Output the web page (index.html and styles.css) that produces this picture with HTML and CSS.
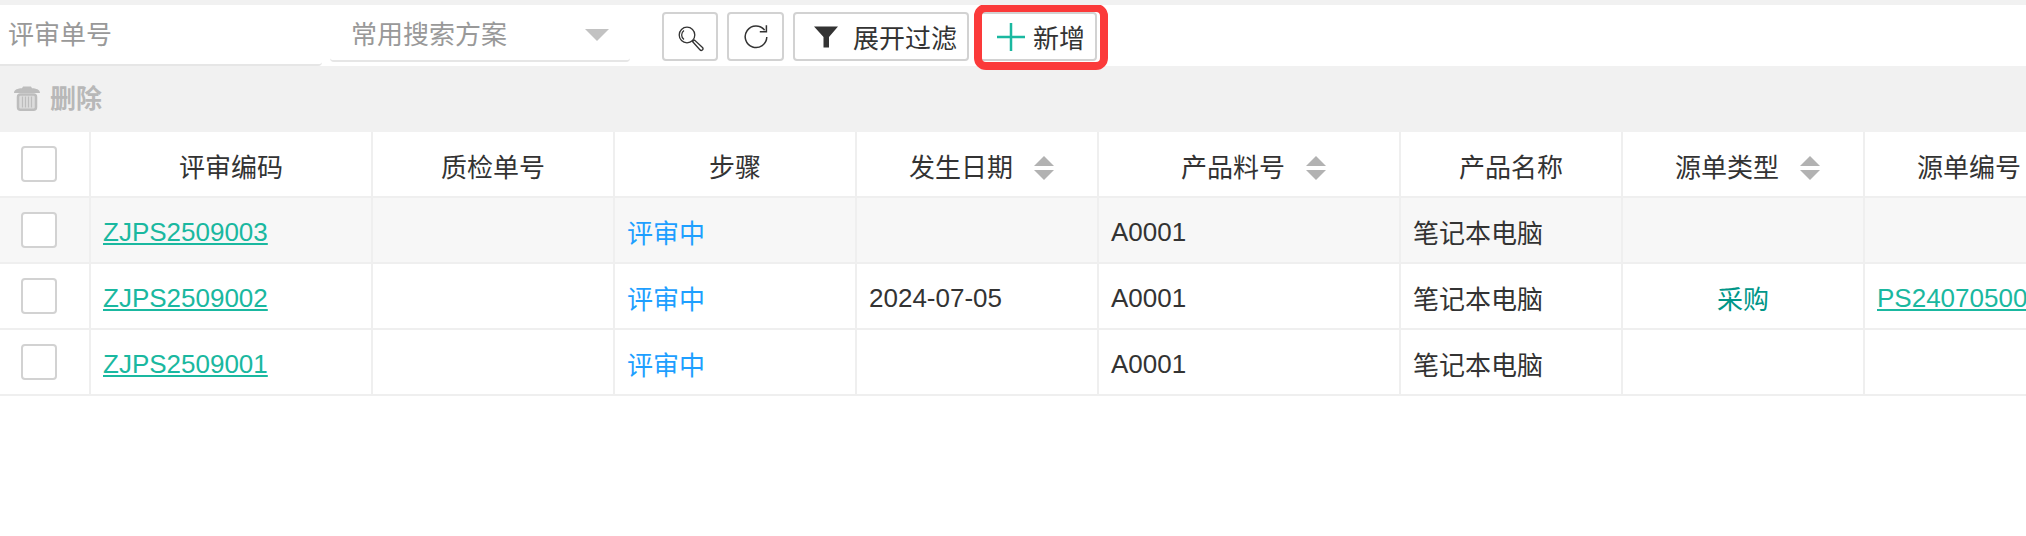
FILE: index.html
```html
<!DOCTYPE html>
<html lang="en">
<head>
    <meta charset="UTF-8">
    <title>评审单</title>
    <link rel="stylesheet" href="styles.css">
</head>
<body>
    <div class="toolbar">
        <div class="search-input">评审单号</div>
        <div class="search-select">
            <span>常用搜索方案</span>
            <i class="select-caret"></i>
        </div>
        <div class="buttons">
            <button class="btn btn-icon" type="button">
                <svg width="28" height="30" viewBox="0 0 28 30" fill="none" stroke="#333" stroke-width="1.3">
                    <circle cx="11" cy="13" r="7.800"/>
                    <path d="M8 8.500a5.500 5.500 0 0 0 0 9"/>
                    <path d="M16.500 19.500l2-1.500 8 7.500a1.700 1.700 0 0 1-2.600 2.300z"/>
                </svg>
            </button>
            <button class="btn btn-icon" type="button">
                <svg width="26" height="26" viewBox="0 0 26 26" fill="none" stroke="#333" stroke-width="1.5">
                    <path d="M21.600 6.200A10.800 10.800 0 1 0 23.800 13"/>
                    <path d="M23.400 1.200v6.600h-6.600"/>
                </svg>
            </button>
            <button class="btn btn-filter" type="button">
                <svg width="24" height="22" viewBox="0 0 24 22">
                    <path d="M0 0.500h24l-9 10.500v10.500h-5.500V11z" fill="#333"/>
                </svg>
                <span>展开过滤</span>
            </button>
            <button class="btn btn-add" type="button">
                <svg width="28" height="28" viewBox="0 0 28 28">
                    <path d="M0 14h28M14 0v28" stroke="#1ab8a0" stroke-width="2.500"/>
                </svg>
                <span>新增</span>
                <i class="red-mark"></i>
            </button>
        </div>
    </div>

    <div class="action-bar">
        <svg class="trash" width="26" height="25" viewBox="0 0 26 25">
            <path d="M0 7C0 3.500 4 2.500 8 2.300L9 0.500h8l1 1.800c4 0.200 8 1.200 8 4.700z" fill="#bdbdbd"/>
            <rect x="4" y="8.500" width="18" height="15.200" rx="2.500" fill="#dcdcdc" stroke="#bdbdbd" stroke-width="2.500"/>
            <path d="M8.500 10.500v11M11.500 10.500v11M14.500 10.500v11M17.500 10.500v11" stroke="#bdbdbd" stroke-width="1.200"/>
        </svg>
        <span>删除</span>
    </div>

    <div class="table-wrap">
        <table class="grid">
            <colgroup>
                <col class="w-check">
                <col class="w-code">
                <col class="w-std">
                <col class="w-std">
                <col class="w-std">
                <col class="w-part">
                <col class="w-name">
                <col class="w-std">
                <col class="w-last">
            </colgroup>
            <thead>
                <tr>
                    <th class="check-cell"><input class="check" type="checkbox"></th>
                    <th>评审编码</th>
                    <th>质检单号</th>
                    <th>步骤</th>
                    <th>发生日期<span class="sort"></span></th>
                    <th>产品料号<span class="sort"></span></th>
                    <th>产品名称</th>
                    <th>源单类型<span class="sort"></span></th>
                    <th>源单编号</th>
                </tr>
            </thead>
            <tbody>
                <tr class="row-hover">
                    <td class="check-cell"><input class="check" type="checkbox"></td>
                    <td class="latin"><a href="#">ZJPS2509003</a></td>
                    <td></td>
                    <td class="status">评审中</td>
                    <td></td>
                    <td class="latin">A0001</td>
                    <td>笔记本电脑</td>
                    <td></td>
                    <td></td>
                </tr>
                <tr>
                    <td class="check-cell"><input class="check" type="checkbox"></td>
                    <td class="latin"><a href="#">ZJPS2509002</a></td>
                    <td></td>
                    <td class="status">评审中</td>
                    <td class="latin">2024-07-05</td>
                    <td class="latin">A0001</td>
                    <td>笔记本电脑</td>
                    <td class="source-type">采购</td>
                    <td class="latin"><a href="#">PS24070500</a></td>
                </tr>
                <tr>
                    <td class="check-cell"><input class="check" type="checkbox"></td>
                    <td class="latin"><a href="#">ZJPS2509001</a></td>
                    <td></td>
                    <td class="status">评审中</td>
                    <td></td>
                    <td class="latin">A0001</td>
                    <td>笔记本电脑</td>
                    <td></td>
                    <td></td>
                </tr>
            </tbody>
        </table>
    </div>
</body>
</html>
```

FILE: styles.css
```css
* {
    margin: 0;
    padding: 0;
    box-sizing: border-box;
}

html, body {
    overflow: hidden;
}

body {
    font-family: "Liberation Sans", "Noto Sans CJK SC", sans-serif;
    font-size: 26px;
    color: #333;
    background: #fff;
    border-top: 5px solid #f1f1f1;
}

.toolbar {
    display: flex;
    align-items: flex-start;
    height: 61px;
    background: #fff;
}

.search-input {
    width: 322px;
    height: 61px;
    padding: 12px 0 0 8px;
    line-height: 36px;
    color: #999;
    border-bottom: 2px solid #e6e6e6;
    border-bottom-right-radius: 4px;
}

.search-select {
    display: flex;
    justify-content: space-between;
    width: 300px;
    height: 57px;
    margin-left: 8px;
    padding: 12px 21px 0 21px;
    line-height: 36px;
    color: #999;
    border-bottom: 2px solid #e6e6e6;
    border-radius: 0 0 4px 4px;
}

.select-caret {
    width: 0;
    height: 0;
    margin-top: 12px;
    border-left: 12px solid transparent;
    border-right: 12px solid transparent;
    border-top: 12px solid #c2c2c2;
}

.buttons {
    display: flex;
    gap: 9px;
    margin: 7px 0 0 32px;
}

.btn {
    display: flex;
    align-items: center;
    height: 49px;
    font: inherit;
    color: #333;
    background: #fff;
    border: 2px solid #d2d2d2;
    border-radius: 4px;
}

.btn-icon {
    justify-content: center;
    width: 56px;
}

.btn-icon + .btn-icon {
    width: 57px;
}

.btn-filter {
    gap: 15px;
    width: 176px;
    padding-left: 19px;
}

.btn-add {
    position: relative;
    gap: 8px;
    width: 119px;
    padding-left: 17px;
}

/* red box drawn over the button */
.red-mark {
    position: absolute;
    top: -10px;
    left: -6px;
    right: -13px;
    bottom: -11px;
    border: 8px solid #fb3a3a;
    border-radius: 12px;
}

.action-bar {
    display: flex;
    align-items: center;
    gap: 10px;
    height: 66px;
    padding: 0 0 5px 14px;
    font-weight: bold;
    color: #b8b8b8;
    background: #f1f1f1;
}

.trash {
    margin-top: 4px;
}

.table-wrap {
    width: 100%;
    overflow: hidden;
}

.grid {
    width: 2075px;
    table-layout: fixed;
    border-collapse: separate;
    border-spacing: 0;
}

.w-check { width: 91px; }
.w-code { width: 282px; }
.w-std { width: 242px; }
.w-part { width: 302px; }
.w-name { width: 222px; }
.w-last { width: 210px; }

.grid th,
.grid td {
    height: 66px;
    padding: 3px 12px 0;
    white-space: nowrap;
    border-right: 2px solid #efefef;
    border-bottom: 2px solid #efefef;
}

.grid th {
    font-weight: normal;
    text-align: center;
    background: #fff;
}

.grid td {
    text-align: left;
}

.grid .latin {
    padding-top: 5px;
}

.grid .check-cell {
    padding: 0 0 0 21px;
    text-align: left;
}

.check {
    display: block;
    width: 36px;
    height: 36px;
    appearance: none;
    background: #fff;
    border: 2px solid #d2d2d2;
    border-radius: 4px;
}

.row-hover td {
    background: #f7f7f7;
}

.grid a {
    color: #1ab8a0;
}

.status {
    color: #1e9fff;
}

.grid .source-type {
    color: #009688;
    text-align: center;
}

.sort {
    display: inline-block;
    position: relative;
    width: 20px;
    height: 24px;
    margin: 0 -9px 0 21px;
    vertical-align: -3px;
}

.sort::before,
.sort::after {
    content: "";
    position: absolute;
    left: 0;
    border-left: 10px solid transparent;
    border-right: 10px solid transparent;
}

.sort::before {
    top: 0;
    border-bottom: 10px solid #b2b2b2;
}

.sort::after {
    bottom: 0;
    border-top: 10px solid #b2b2b2;
}
```
